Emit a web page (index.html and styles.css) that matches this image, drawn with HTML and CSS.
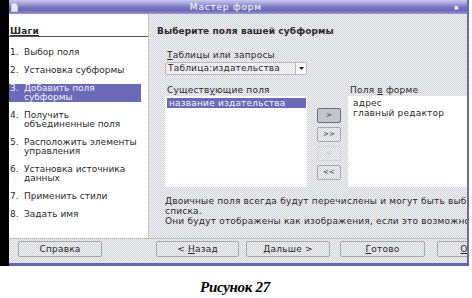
FILE: index.html
```html
<!DOCTYPE html>
<html lang="ru">
<head>
<meta charset="utf-8">
<title>Мастер форм</title>
<link rel="stylesheet" href="styles.css">
</head>
<body>
<div class="screen">
  <div class="blackbar"></div>
  <div class="window">
    <div class="titlebar">
      <svg class="ticon" width="7" height="9" viewBox="0 0 7 9"><path d="M0.5 0.5h4l2 2v6h-6z" fill="#e8e8f4" stroke="#c8c8e0"/></svg>
      <span class="title">Мастер форм</span>
      <span class="close">&#x2716;</span>
    </div>
    <div class="body">
      <div class="steps">
        <div class="steps-head">Шаги</div>
        <ol class="steplist">
          <li class="step"><span class="num">1.</span><span>Выбор поля</span></li>
          <li class="step"><span class="num">2.</span><span>Установка субформы</span></li>
          <li class="step active"><span class="num">3.</span><span>Добавить поля субформы</span></li>
          <li class="step"><span class="num">4.</span><span>Получить объединенные поля</span></li>
          <li class="step"><span class="num">5.</span><span>Расположить элементы управления</span></li>
          <li class="step"><span class="num">6.</span><span>Установка источника данных</span></li>
          <li class="step"><span class="num">7.</span><span>Применить стили</span></li>
          <li class="step"><span class="num">8.</span><span>Задать имя</span></li>
        </ol>
      </div>
      <div class="main">
        <div class="heading">Выберите поля вашей субформы</div>
        <div class="label first"><u>Т</u>аблицы или запросы</div>
        <div class="combo"><span class="combo-text">Таблица:издательства</span><span class="combo-btn"><svg width="5" height="3" viewBox="0 0 5 3"><path d="M0 0h5L2.5 3z" fill="#222"/></svg></span></div>
        <div class="lists">
          <div class="col left">
            <div class="label">Существ<u>у</u>ющие поля</div>
            <div class="listbox">
              <div class="item selected">название издательства</div>
            </div>
          </div>
          <div class="movebtns">
            <div class="mbtn focus">&gt;</div>
            <div class="mbtn">&gt;&gt;</div>
            <div class="mbtn disabled">&lt;</div>
            <div class="mbtn">&lt;&lt;</div>
          </div>
          <div class="col right">
            <div class="label">Поля <u>в</u> форме</div>
            <div class="listbox">
              <div class="item">адрес</div>
              <div class="item">главный редактор</div>
            </div>
          </div>
        </div>
        <div class="info">Двоичные поля всегда будут перечислены и могут быть выбраны из<br>списка.<br>Они будут отображены как изображения, если это возможно.</div>
      </div>
    </div>
    <div class="footer">
      <div class="btn help">Справка</div>
      <div class="btn back">&lt; <u>Н</u>азад</div>
      <div class="btn next">Дальше &gt;</div>
      <div class="btn done"><u>Г</u>отово</div>
      <div class="btn cancel"><u>О</u>тмена</div>
    </div>
  </div>
</div>
<div class="caption">Рисунок 27</div>
</body>
</html>
```

FILE: styles.css
```css
* { box-sizing: border-box; }
html, body { margin: 0; padding: 0; background: #fff; }
body {
  width: 472px;
  height: 298px;
  overflow: hidden;
  font-family: "DejaVu Sans", sans-serif;
  font-size: 9px;
  letter-spacing: 0.2px;
  color: #2a2a2a;
}
.screen {
  display: flex;
  height: 266px;
}
.blackbar {
  width: 9px;
  background: #000;
}
.window {
  width: 460px;
  display: flex;
  flex-direction: column;
  border-right: 2px solid #6a6ab4;
  border-bottom: 3px solid #6464b0;
  overflow: hidden;
}
.titlebar {
  height: 14px;
  flex: none;
  display: flex;
  align-items: center;
  padding: 0 8px 0 2px;
  background: linear-gradient(#c8c8ee 0, #a4a4dc 25%, #7878c0 50%, #6a6ab6 75%, #9898d0 100%);
  color: #fff;
}
.ticon { flex: none; }
.title {
  flex: 1;
  text-align: center;
  padding-right: 20px;
  letter-spacing: 0.8px;
  line-height: 12px;
}
.close {
  font-size: 6px;
  color: #fff;
}
.body {
  flex: 1;
  display: flex;
  min-height: 0;
}
.steps {
  width: 140px;
  flex: none;
  background: #fff;
  border-right: 1px solid #c8c8c8;
  padding-top: 12px;
}
.steps-head {
  font-weight: bold;
  line-height: 10px;
  padding-left: 1px;
  border-bottom: 1px solid #555;
  text-decoration: underline;
}
.steplist {
  list-style: none;
  margin: 11px 0 0;
  padding: 0;
  display: flex;
  flex-direction: column;
  gap: 9px;
}
.step {
  display: flex;
  width: 132px;
  line-height: 9px;
  padding-left: 1px;
  letter-spacing: 0;
}
.num { width: 14px; flex: none; }
.step.active {
  background: #6a6ab8;
  color: #f0f0ff;
  margin-right: 8px;
}
.main {
  flex: 1;
  min-width: 0;
  padding: 12px 0 0 8px;
  background: repeating-conic-gradient(#cfcfd8 0 25%, #f6f6f6 0 50%) 0 0 / 2px 2px;
  white-space: nowrap;
}
.heading {
  font-weight: bold;
  line-height: 10px;
  letter-spacing: 0.1px;
}
.label {
  line-height: 10px;
  padding-left: 2px;
}
.label.first { margin: 14px 0 0 8px; }
.combo {
  margin: 2px 0 0 8px;
  width: 142px;
  height: 13px;
  display: flex;
  border: 1px solid #b8b8b8;
  border-radius: 2px;
  background: repeating-conic-gradient(#e0e0e6 0 25%, #fafafa 0 50%) 0 0 / 2px 2px;
}
.combo-text {
  flex: 1;
  line-height: 11px;
  padding-left: 2px;
  overflow: hidden;
}
.combo-btn {
  width: 11px;
  flex: none;
  border-left: 1px solid #b8b8b8;
  display: flex;
  align-items: center;
  justify-content: center;
  background: #fafafa;
}
.lists {
  margin: 10px 0 0 8px;
  display: flex;
  align-items: flex-start;
}
.col.left { width: 142px; flex: none; }
.col.right { width: 130px; flex: none; }
.listbox {
  margin-top: 1px;
  height: 91px;
  background: #fff;
  padding-top: 2px;
}
.col.left .item { margin-left: 2px; }
.item { line-height: 10px; padding-left: 2px; }
.col.right .item { padding-left: 5px; line-height: 10px; }
.item.selected {
  background: #6a6ab8;
  color: #f2f2ff;
  margin-right: 1px;
}
.movebtns {
  width: 24px;
  flex: none;
  margin: 23px 7px 0 10px;
  display: flex;
  flex-direction: column;
  gap: 4px;
}
.mbtn {
  height: 15px;
  line-height: 13px;
  text-align: center;
  border: 1px solid #a8a8a8;
  border-radius: 2px;
  font-size: 7px;
  color: #333;
}
.mbtn.focus {
  border-color: #6a6a80;
  background: #c4c4cc;
}
.mbtn.disabled {
  color: #c4c4c4;
  border-color: #d4d4d4;
}
.info {
  margin: 9px 0 0 8px;
  line-height: 10px;
}
.footer {
  height: 25px;
  flex: none;
  border-top: 1px solid #c0c0c0;
  background: repeating-conic-gradient(#cfcfd8 0 25%, #f6f6f6 0 50%) 0 0 / 2px 2px;
  display: flex;
  align-items: flex-start;
  padding: 2px 0 0 9px;
  white-space: nowrap;
}
.btn {
  flex: none;
  height: 16px;
  line-height: 14px;
  text-align: center;
  border: 1px solid #a8a8a8;
  border-radius: 2px;
}
.help { width: 84px; }
.back { width: 83px; margin-left: 54px; }
.next { width: 84px; margin-left: 7px; }
.done { width: 85px; margin-left: 10px; }
.cancel { width: 84px; margin-left: 12px; }
.caption {
  text-align: center;
  margin: 13px 0 0 0;
  padding-right: 2px;
  font-family: "Liberation Serif", serif;
  font-weight: bold;
  font-style: italic;
  font-size: 15px;
  line-height: 16px;
  letter-spacing: -0.3px;
  color: #000;
}
```
